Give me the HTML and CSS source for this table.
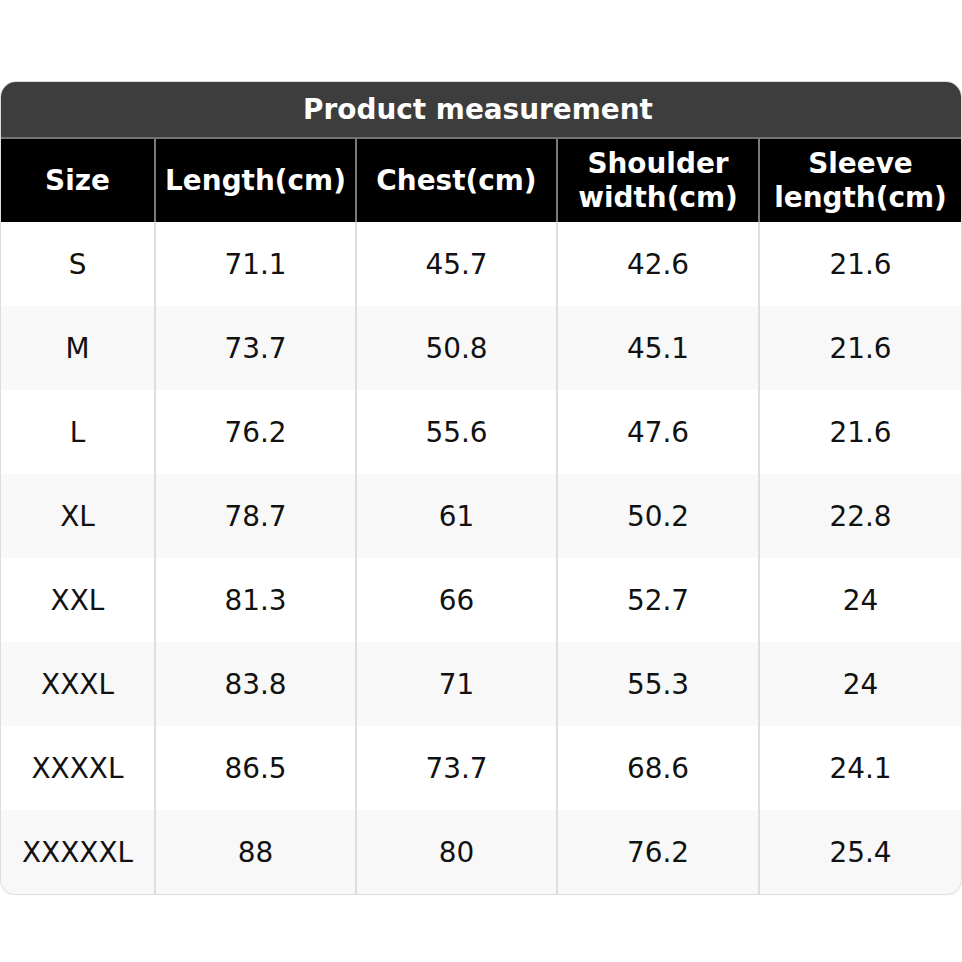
FILE: index.html
```html
<!DOCTYPE html>
<html>
<head>
<meta charset="utf-8">
<link rel="stylesheet" href="styles.css">
</head>
<body>
<div class="card">
  <div class="title">Product measurement</div>
  <div class="grid">
    <div class="hcell first">Size</div>
    <div class="hcell">Length(cm)</div>
    <div class="hcell">Chest(cm)</div>
    <div class="hcell">Shoulder<br>width(cm)</div>
    <div class="hcell">Sleeve<br>length(cm)</div>

    <div class="cell first">S</div><div class="cell">71.1</div><div class="cell">45.7</div><div class="cell">42.6</div><div class="cell">21.6</div>
    <div class="cell first alt">M</div><div class="cell alt">73.7</div><div class="cell alt">50.8</div><div class="cell alt">45.1</div><div class="cell alt">21.6</div>
    <div class="cell first">L</div><div class="cell">76.2</div><div class="cell">55.6</div><div class="cell">47.6</div><div class="cell">21.6</div>
    <div class="cell first alt">XL</div><div class="cell alt">78.7</div><div class="cell alt">61</div><div class="cell alt">50.2</div><div class="cell alt">22.8</div>
    <div class="cell first">XXL</div><div class="cell">81.3</div><div class="cell">66</div><div class="cell">52.7</div><div class="cell">24</div>
    <div class="cell first alt">XXXL</div><div class="cell alt">83.8</div><div class="cell alt">71</div><div class="cell alt">55.3</div><div class="cell alt">24</div>
    <div class="cell first">XXXXL</div><div class="cell">86.5</div><div class="cell">73.7</div><div class="cell">68.6</div><div class="cell">24.1</div>
    <div class="cell first alt">XXXXXL</div><div class="cell alt">88</div><div class="cell alt">80</div><div class="cell alt">76.2</div><div class="cell alt">25.4</div>
  </div>
</div>
</body>
</html>
```
FILE: styles.css
```css
html, body {
  margin: 0;
  padding: 0;
  background: #ffffff;
}
body {
  font-family: "DejaVu Sans", sans-serif;
  font-size: 27.9px;
  color: #111;
}
.card {
  margin-top: 81px;
  width: 962px;
  box-sizing: border-box;
  border: 1px solid #dcdcdc;
  border-radius: 16px;
  overflow: hidden;
  background: #fff;
  box-shadow: 0 1px 2px rgba(0,0,0,0.08);
}
.title {
  height: 55px;
  background: #3d3d3d;
  color: #fff;
  font-weight: bold;
  display: flex;
  align-items: center;
  justify-content: center;
  padding-right: 6px;
  border-bottom: 2px solid #737373;
}
.grid {
  display: grid;
  grid-template-columns: 153px 201px 201px 202px 1fr;
}
.hcell {
  height: 83px;
  background: #000;
  color: #fff;
  font-weight: bold;
  line-height: 1.2;
  display: flex;
  align-items: center;
  justify-content: center;
  text-align: center;
  border-left: 2px solid #7a7a7a;
}
.cell {
  height: 84px;
  display: flex;
  align-items: center;
  justify-content: center;
  border-left: 2px solid #dedede;
  background: #fff;
}
.cell.alt {
  background: #f8f8f8;
}
.first {
  border-left: none;
}
```
